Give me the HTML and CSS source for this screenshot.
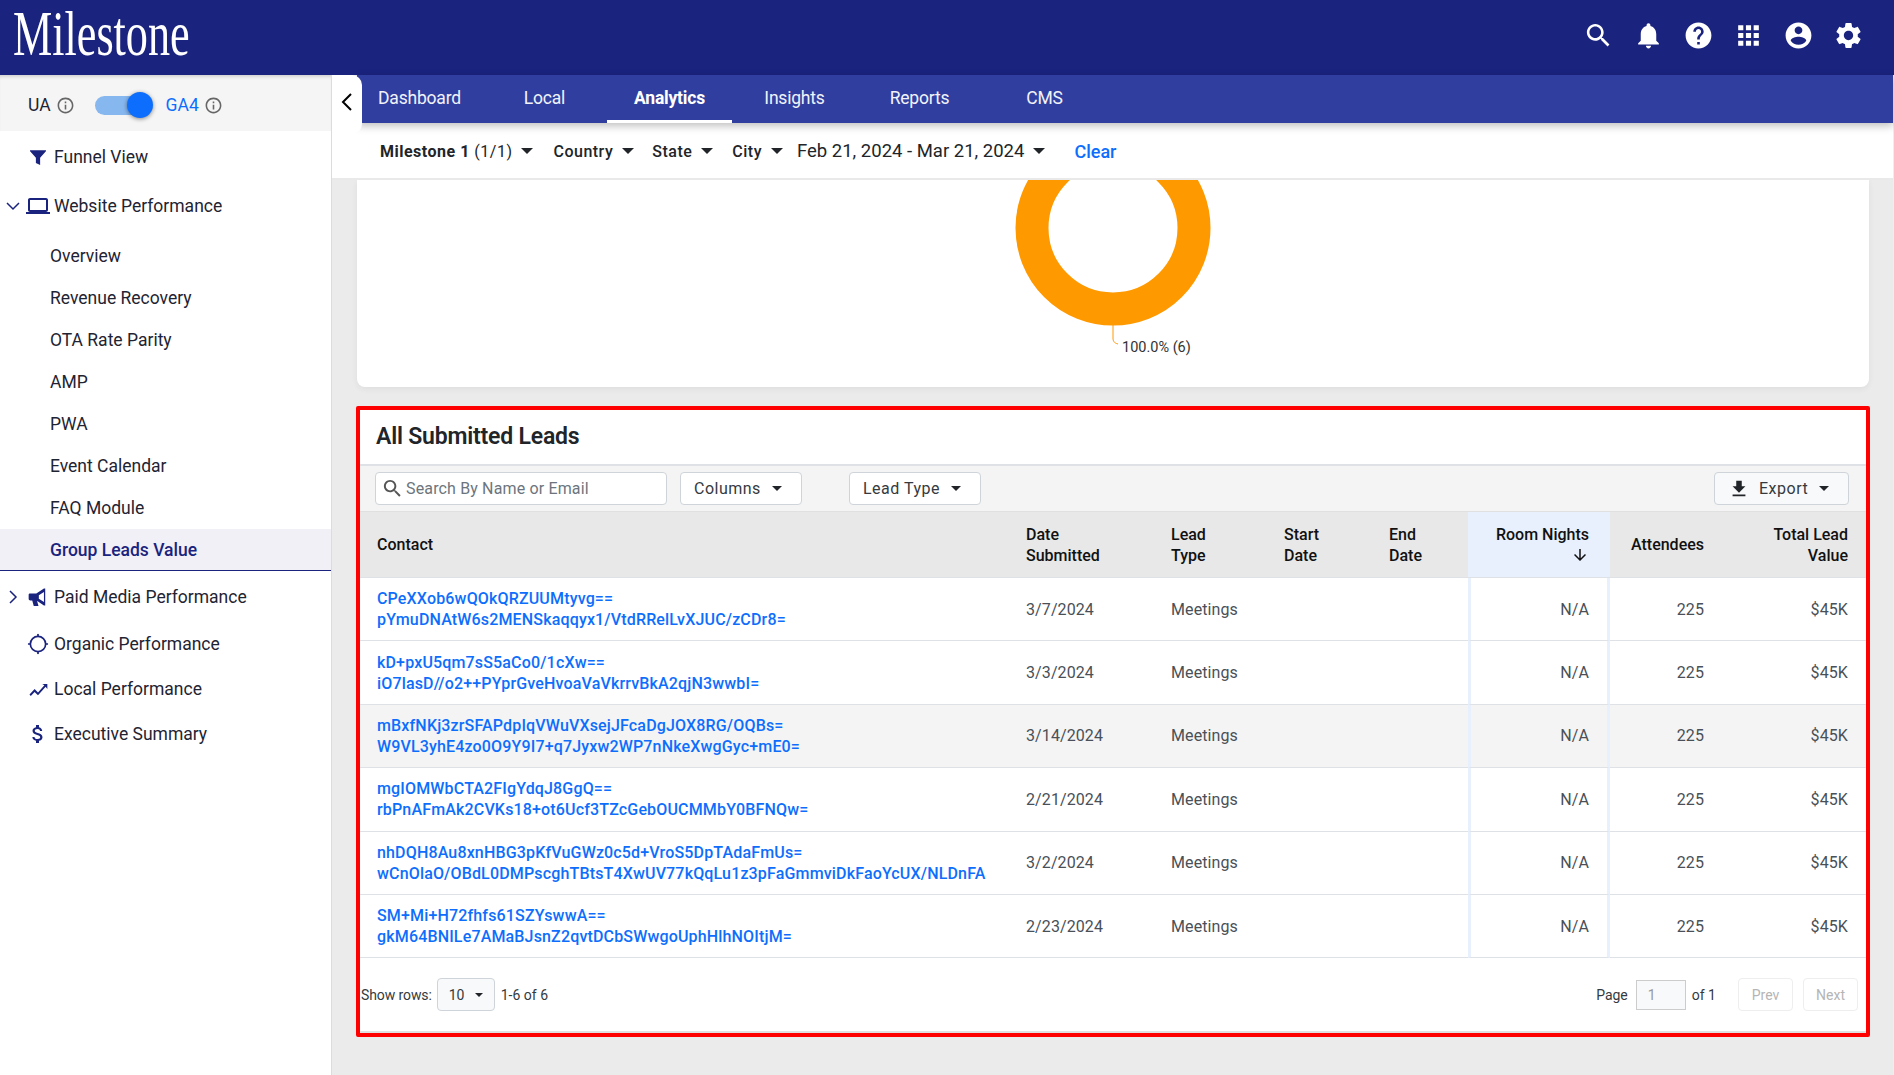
FILE: index.html
```html
<!DOCTYPE html>
<html lang="en">
<head>
    <meta charset="UTF-8">
    <meta name="viewport" content="width=device-width, initial-scale=1.0">
    <title>Group Leads Value</title>
    <link rel="stylesheet" href="styles.css">
</head>
<body>
    <header class="top-header">
        <div class="logo">Milestone</div>
        <div class="header-icons">
            <svg viewBox="0 0 24 24"><path d="M15.5 14h-.79l-.28-.27C15.41 12.59 16 11.11 16 9.5 16 5.91 13.09 3 9.5 3S3 5.91 3 9.5 5.91 16 9.5 16c1.61 0 3.09-.59 4.23-1.57l.27.28v.79l5 4.99L20.49 19l-4.99-5zm-6 0C7.01 14 5 11.99 5 9.5S7.01 5 9.5 5 14 7.01 14 9.5 11.99 14 9.5 14z"/></svg>
            <svg viewBox="0 0 24 24"><path d="M12 22c1.1 0 2-.9 2-2h-4c0 1.1.89 2 2 2zm6-6v-5c0-3.07-1.64-5.64-4.5-6.32V4c0-.83-.67-1.5-1.5-1.5s-1.5.67-1.5 1.5v.68C7.63 5.36 6 7.92 6 11v5l-2 2v1h16v-1l-2-2z"/></svg>
            <svg viewBox="0 0 24 24"><path d="M12 2C6.48 2 2 6.48 2 12s4.48 10 10 10 10-4.48 10-10S17.52 2 12 2zm1 17h-2v-2h2v2zm2.07-7.75l-.9.92C13.45 12.9 13 13.5 13 15h-2v-.5c0-1.1.45-2.1 1.17-2.83l1.24-1.26c.37-.36.59-.86.59-1.41 0-1.1-.9-2-2-2s-2 .9-2 2H8c0-2.21 1.79-4 4-4s4 1.79 4 4c0 .88-.36 1.68-.93 2.25z"/></svg>
            <svg viewBox="0 0 24 24"><path d="M4 8h4V4H4v4zm6 12h4v-4h-4v4zm-6 0h4v-4H4v4zm0-6h4v-4H4v4zm6 0h4v-4h-4v4zm6-10v4h4V4h-4zm-6 4h4V4h-4v4zm6 6h4v-4h-4v4zm0 6h4v-4h-4v4z"/></svg>
            <svg viewBox="0 0 24 24"><path d="M12 2C6.48 2 2 6.48 2 12s4.48 10 10 10 10-4.48 10-10S17.52 2 12 2zm0 3c1.66 0 3 1.34 3 3s-1.34 3-3 3-3-1.34-3-3 1.34-3 3-3zm0 14.2c-2.5 0-4.71-1.28-6-3.22.03-1.99 4-3.08 6-3.08 1.99 0 5.97 1.09 6 3.08-1.29 1.94-3.5 3.22-6 3.22z"/></svg>
            <svg viewBox="0 0 24 24"><path d="M19.14 12.94c.04-.3.06-.61.06-.94 0-.32-.02-.64-.07-.94l2.03-1.58c.18-.14.23-.41.12-.61l-1.92-3.32c-.12-.22-.37-.29-.59-.22l-2.39.96c-.5-.38-1.03-.7-1.62-.94l-.36-2.54c-.04-.24-.24-.41-.48-.41h-3.84c-.24 0-.43.17-.47.41l-.36 2.54c-.59.24-1.13.57-1.62.94l-2.39-.96c-.22-.08-.47 0-.59.22L2.74 8.87c-.12.21-.08.47.12.61l2.03 1.58c-.05.3-.09.63-.09.94s.02.64.07.94l-2.03 1.58c-.18.14-.23.41-.12.61l1.92 3.32c.12.22.37.29.59.22l2.39-.96c.5.38 1.03.7 1.62.94l.36 2.54c.05.24.24.41.48.41h3.84c.24 0 .44-.17.47-.41l.36-2.54c.59-.24 1.13-.56 1.62-.94l2.39.96c.22.08.47 0 .59-.22l1.92-3.32c.12-.22.07-.47-.12-.61l-2.01-1.58zM12 15.6c-1.98 0-3.6-1.62-3.6-3.6s1.62-3.6 3.6-3.6 3.6 1.62 3.6 3.6-1.62 3.6-3.6 3.6z"/></svg>
        </div>
    </header>

    <div class="app">
        <aside class="sidebar">
            <div class="version-strip">
                <span>UA</span>
                <svg class="info-icon" viewBox="0 0 24 24"><path d="M11 7h2v2h-2zm0 4h2v6h-2zm1-9C6.48 2 2 6.48 2 12s4.48 10 10 10 10-4.48 10-10S17.52 2 12 2zm0 18c-4.41 0-8-3.59-8-8s3.59-8 8-8 8 3.59 8 8-3.59 8-8 8z"/></svg>
                <span class="switch"><span class="switch-knob"></span></span>
                <span class="ga4">GA4</span>
                <svg class="info-icon" viewBox="0 0 24 24"><path d="M11 7h2v2h-2zm0 4h2v6h-2zm1-9C6.48 2 2 6.48 2 12s4.48 10 10 10 10-4.48 10-10S17.52 2 12 2zm0 18c-4.41 0-8-3.59-8-8s3.59-8 8-8 8 3.59 8 8-3.59 8-8 8z"/></svg>
            </div>

            <nav class="side-nav">
                <a class="nav-main funnel-item" href="#">
                    <span class="nav-toggle"></span>
                    <svg class="nav-icon" viewBox="0 0 24 24"><path d="M3.2 4h17.6c.6 0 .9.7.5 1.2L14.5 13v8.5l-5-2.5v-6L2.7 5.2C2.3 4.7 2.6 4 3.2 4z"/></svg>
                    Funnel View
                </a>
                <a class="nav-main website-item" href="#">
                    <svg class="nav-toggle" viewBox="0 0 14 14"><path d="M1 4l6 6 6-6" fill="none" stroke="#1a237e" stroke-width="1.5"/></svg>
                    <svg class="nav-icon" viewBox="0 0 24 24"><path d="M20 18c1.1 0 1.99-.9 1.99-2L22 6c0-1.1-.9-2-2-2H4c-1.1 0-2 .9-2 2v10c0 1.1.9 2 2 2H0v2h24v-2h-4zM4 6h16v10H4V6z"/></svg>
                    Website Performance
                </a>
                <div class="sub-nav">
                    <a href="#">Overview</a>
                    <a href="#">Revenue Recovery</a>
                    <a href="#">OTA Rate Parity</a>
                    <a href="#">AMP</a>
                    <a href="#">PWA</a>
                    <a href="#">Event Calendar</a>
                    <a href="#">FAQ Module</a>
                    <a class="active" href="#">Group Leads Value</a>
                </div>
                <a class="nav-main paid-item" href="#">
                    <svg class="nav-toggle" viewBox="0 0 14 14"><path d="M4 1l6 6-6 6" fill="none" stroke="#1a237e" stroke-width="1.5"/></svg>
                    <svg class="nav-icon icon-small" viewBox="0 0 24 24"><path d="M1 9.5C1 8.5 1.8 8 2.5 8H10l9-6h1.500v20H19l-7-4.800V17h-1l1.600 5.500H7L5.200 16H3c-1.200 0-2-.8-2-2zM19 6l-6 4v4l6 4z"/></svg>
                    Paid Media Performance
                </a>
                <a class="nav-main organic-item" href="#">
                    <span class="nav-toggle"></span>
                    <svg class="nav-icon icon-small" viewBox="0 0 24 24"><circle cx="12" cy="12" r="9" fill="none" stroke="#1a237e" stroke-width="2"/><path d="M11 0h2v3h-2zM11 21h2v3h-2zM0 11h3v2H0zM21 11h3v2h-3z"/></svg>
                    Organic Performance
                </a>
                <a class="nav-main local-item" href="#">
                    <span class="nav-toggle"></span>
                    <svg class="nav-icon icon-small" viewBox="0 0 24 24"><path d="M2 18.500l6-6.500 4 4 7.500-8.500-2.500-1.500h6v6l-2-2.500-9 10-4-4-4.500 4.800z"/></svg>
                    Local Performance
                </a>
                <a class="nav-main summary-item" href="#">
                    <span class="nav-toggle"></span>
                    <svg class="nav-icon" viewBox="0 0 24 24"><path d="M11.800 10.900c-2.270-.59-3-1.200-3-2.150 0-1.090 1.010-1.850 2.700-1.850 1.780 0 2.440.85 2.500 2.100h2.210c-.07-1.720-1.120-3.300-3.210-3.810V3h-3v2.160c-1.940.42-3.500 1.680-3.500 3.610 0 2.310 1.910 3.460 4.700 4.130 2.500.6 3 1.480 3 2.410 0 .69-.49 1.790-2.700 1.790-2.060 0-2.870-.92-2.980-2.100h-2.200c.12 2.190 1.760 3.420 3.680 3.830V21h3v-2.150c1.950-.37 3.500-1.500 3.500-3.550 0-2.840-2.430-3.810-4.700-4.400z"/></svg>
                    Executive Summary
                </a>
            </nav>
        </aside>

        <main class="main">
            <div class="tab-row">
                <button class="btn-collapse">
                    <svg viewBox="0 0 14 20"><path d="M11 2l-8 8 8 8" fill="none" stroke="#000" stroke-width="2"/></svg>
                </button>
                <div class="tabs">
                    <a href="#">Dashboard</a>
                    <a href="#">Local</a>
                    <a class="active" href="#">Analytics</a>
                    <a href="#">Insights</a>
                    <a href="#">Reports</a>
                    <a href="#">CMS</a>
                </div>
            </div>

            <div class="filter-bar">
                <span class="filter milestone-filter"><b>Milestone 1</b> (1/1)<i class="caret"></i></span>
                <span class="filter country-filter">Country<i class="caret"></i></span>
                <span class="filter state-filter">State<i class="caret"></i></span>
                <span class="filter city-filter">City<i class="caret"></i></span>
                <span class="filter date-filter">Feb 21, 2024 - Mar 21, 2024<i class="caret"></i></span>
                <a class="clear-link" href="#">Clear</a>
            </div>

            <div class="content">
                <section class="chart-card">
                    <svg class="donut" viewBox="0 1 300 207">
                        <circle cx="150" cy="49" r="81" fill="none" stroke="#ff9900" stroke-width="33"/>
                        <path d="M150 146v13c0 3 1 5 5 6" fill="none" stroke="#ff9900"/>
                        <text class="donut-label" x="159" y="173">100.0% (6)</text>
                    </svg>
                </section>

                <section class="leads-card">
                    <h2>All Submitted Leads</h2>

                    <div class="toolbar">
                        <div class="search-box">
                            <svg viewBox="0 0 24 24"><path d="M15.500 14h-.79l-.28-.27C15.410 12.590 16 11.110 16 9.500 16 5.910 13.090 3 9.500 3S3 5.910 3 9.500 5.910 16 9.500 16c1.610 0 3.090-.59 4.230-1.570l.27.28v.79l5 4.990L20.490 19l-4.990-5zm-6 0C7.010 14 5 11.990 5 9.500S7.010 5 9.500 5 14 7.010 14 9.500 11.990 14 9.500 14z"/></svg>
                            <span>Search By Name or Email</span>
                        </div>
                        <button class="btn-tool btn-columns">Columns<i class="caret"></i></button>
                        <button class="btn-tool btn-lead">Lead Type<i class="caret"></i></button>
                        <button class="btn-tool btn-export">
                            <svg viewBox="0 0 24 24"><path d="M19 9h-4V3H9v6H5l7 7 7-7zM5 18v2h14v-2H5z"/></svg>
                            Export<i class="caret"></i>
                        </button>
                    </div>

                    <table class="leads-table">
                        <colgroup>
                            <col class="col-contact">
                            <col class="col-date">
                            <col class="col-type">
                            <col class="col-start">
                            <col class="col-end">
                            <col class="col-nights">
                            <col class="col-attendees">
                            <col class="col-value">
                        </colgroup>
                        <thead>
                            <tr>
                                <th class="contact">Contact</th>
                                <th>Date<br>Submitted</th>
                                <th>Lead<br>Type</th>
                                <th>Start<br>Date</th>
                                <th>End<br>Date</th>
                                <th class="num nights sorted">Room Nights<br><svg class="sort-arrow" viewBox="0 0 24 24"><path d="M20 12l-1.410-1.410L13 16.170V4h-2v12.170l-5.580-5.590L4 12l8 8 8-8z"/></svg></th>
                                <th class="num attendees">Attendees</th>
                                <th class="num value">Total Lead<br>Value</th>
                            </tr>
                        </thead>
                        <tbody>
                            <tr>
                                <td class="contact"><a href="#">CPeXXob6wQOkQRZUUMtyvg==<br>pYmuDNAtW6s2MENSkaqqyx1/VtdRRelLvXJUC/zCDr8=</a></td>
                                <td>3/7/2024</td><td>Meetings</td><td></td><td></td>
                                <td class="num nights">N/A</td><td class="num attendees">225</td><td class="num value">$45K</td>
                            </tr>
                            <tr>
                                <td class="contact"><a href="#">kD+pxU5qm7sS5aCo0/1cXw==<br>iO7lasD//o2++PYprGveHvoaVaVkrrvBkA2qjN3wwbI=</a></td>
                                <td>3/3/2024</td><td>Meetings</td><td></td><td></td>
                                <td class="num nights">N/A</td><td class="num attendees">225</td><td class="num value">$45K</td>
                            </tr>
                            <tr class="row-hover">
                                <td class="contact"><a href="#">mBxfNKj3zrSFAPdpIqVWuVXsejJFcaDgJOX8RG/OQBs=<br>W9VL3yhE4zo0O9Y9I7+q7Jyxw2WP7nNkeXwgGyc+mE0=</a></td>
                                <td>3/14/2024</td><td>Meetings</td><td></td><td></td>
                                <td class="num nights">N/A</td><td class="num attendees">225</td><td class="num value">$45K</td>
                            </tr>
                            <tr>
                                <td class="contact"><a href="#">mgIOMWbCTA2FIgYdqJ8GgQ==<br>rbPnAFmAk2CVKs18+ot6Ucf3TZcGebOUCMMbY0BFNQw=</a></td>
                                <td>2/21/2024</td><td>Meetings</td><td></td><td></td>
                                <td class="num nights">N/A</td><td class="num attendees">225</td><td class="num value">$45K</td>
                            </tr>
                            <tr>
                                <td class="contact"><a href="#">nhDQH8Au8xnHBG3pKfVuGWz0c5d+VroS5DpTAdaFmUs=<br>wCnOlaO/OBdL0DMPscghTBtsT4XwUV77kQqLu1z3pFaGmmviDkFaoYcUX/NLDnFA</a></td>
                                <td>3/2/2024</td><td>Meetings</td><td></td><td></td>
                                <td class="num nights">N/A</td><td class="num attendees">225</td><td class="num value">$45K</td>
                            </tr>
                            <tr>
                                <td class="contact"><a href="#">SM+Mi+H72fhfs61SZYswwA==<br>gkM64BNILe7AMaBJsnZ2qvtDCbSWwgoUphHlhNOItjM=</a></td>
                                <td>2/23/2024</td><td>Meetings</td><td></td><td></td>
                                <td class="num nights">N/A</td><td class="num attendees">225</td><td class="num value">$45K</td>
                            </tr>
                        </tbody>
                    </table>

                    <div class="table-footer">
                        <span class="rows-label">Show rows:</span>
                        <span class="rows-select">10<i class="caret"></i></span>
                        <span>1-6 of 6</span>
                        <div class="pager">
                            <span>Page</span>
                            <span class="page-input">1</span>
                            <span>of 1</span>
                            <button class="btn-page btn-prev">Prev</button>
                            <button class="btn-page">Next</button>
                        </div>
                    </div>
                </section>
            </div>
        </main>
    </div>
</body>
</html>
```

FILE: styles.css
```css
* {
    box-sizing: border-box;
}

html, body {
    height: 100%;
}

body {
    font-family: Roboto, "Liberation Sans", sans-serif;
    color: #212529;
    background-color: #ebebeb;
    margin: 0;
    overflow: hidden;
    display: flex;
    flex-direction: column;
}

a {
    text-decoration: none;
    color: inherit;
}

button {
    font-family: inherit;
}

.caret {
    display: inline-block;
    width: 0;
    height: 0;
    border-left: 5px solid transparent;
    border-right: 5px solid transparent;
    border-top: 5px solid #212529;
}

/* Cabecera */
.top-header {
    height: 75px;
    flex: none;
    background-color: #1a237e;
    display: flex;
    justify-content: space-between;
    align-items: center;
    padding-right: 30px;
    padding-bottom: 4px;
}

.logo {
    font-family: "Liberation Serif", serif;
    font-size: 64px;
    line-height: 75px;
    color: #ffffff;
    margin-left: 13px;
    margin-bottom: 4px;
    transform: scaleX(0.69);
    transform-origin: left center;
}

.header-icons {
    display: flex;
    gap: 19px;
}

.header-icons svg {
    width: 31px;
    height: 31px;
    fill: #ffffff;
}

.app {
    flex: 1;
    min-height: 0;
    display: flex;
}

/* Menu lateral */
.sidebar {
    width: 332px;
    flex: none;
    background-color: #ffffff;
    border-right: 1px solid #dcdcdc;
    font-size: 17.5px;
    color: #1f2433;
}

.version-strip {
    height: 56px;
    background-color: #f5f5f5;
    display: flex;
    align-items: center;
    padding-left: 28px;
    padding-top: 4px;
    box-shadow: inset 0 4px 4px -3px rgba(0,0,0,0.2);
}

.info-icon {
    width: 19px;
    height: 19px;
    fill: #666666;
    margin-left: 5px;
}

.switch {
    position: relative;
    width: 54px;
    height: 19px;
    margin-left: 20px;
    margin-right: 17px;
    border-radius: 10px;
    background-color: #86b7ef;
}

.switch-knob {
    position: absolute;
    right: -4px;
    top: -3.5px;
    width: 26px;
    height: 26px;
    border-radius: 50%;
    background-color: #0d6efd;
    box-shadow: 0 1px 4px rgba(0,0,0,0.45);
}

.ga4 {
    color: #0d6efd;
}

.side-nav {
    display: flex;
    flex-direction: column;
}

.nav-main {
    display: flex;
    align-items: center;
    height: 42px;
    padding-left: 4px;
}

.nav-toggle {
    width: 18px;
    height: 14px;
    flex: none;
    margin-right: 4px;
}

.nav-icon {
    width: 24px;
    height: 24px;
    fill: #1a237e;
    margin-right: 4px;
    flex: none;
}

.icon-small {
    transform: scale(0.85);
}

.funnel-item {
    height: 51px;
}

.website-item {
    margin-top: 3px;
    margin-bottom: 8px;
}

.funnel-item .nav-icon {
    transform: scale(0.85);
}

.sub-nav a {
    display: flex;
    align-items: center;
    height: 42px;
    padding-left: 50px;
}

.sub-nav a.active {
    color: #1a237e;
    font-weight: 500;
    background-color: #f0f0f6;
    border-bottom: 1px solid #1a237e;
}

.paid-item {
    margin-top: 5px;
}

.organic-item {
    margin-top: 5px;
}

.local-item,
.summary-item {
    margin-top: 3px;
}

/* Pestañas */
.main {
    flex: 1;
    min-width: 0;
    display: flex;
    flex-direction: column;
    border-right: 1px solid #eeeeee;
}

.tab-row {
    height: 48px;
    flex: none;
    display: flex;
    align-items: flex-start;
    position: relative;
    z-index: 3;
}

.btn-collapse {
    position: relative;
    z-index: 1;
    width: 30px;
    height: 59px;
    flex: none;
    padding: 0 0 5px;
    border: none;
    border-radius: 0 10px 10px 0;
    background-color: #ffffff;
    display: flex;
    align-items: center;
    justify-content: center;
}

.btn-collapse svg {
    width: 14px;
    height: 20px;
}

.tabs {
    flex: 1;
    height: 48px;
    margin-left: -5px;
    display: flex;
    background-color: #303f9f;
    box-shadow: 0 3px 8px rgba(0,0,0,0.25);
}

.tabs a {
    width: 125px;
    height: 48px;
    color: #f2f3fa;
    font-size: 17.5px;
    letter-spacing: -0.2px;
    display: flex;
    align-items: center;
    justify-content: center;
    padding-bottom: 3px;
}

.tabs a.active {
    color: #ffffff;
    font-weight: 700;
    border-bottom: 3px solid #ffffff;
    padding-bottom: 0;
}

/* Filtros */
.filter-bar {
    height: 57px;
    flex: none;
    background-color: #ffffff;
    border-bottom: 2px solid #e9e9e9;
    display: flex;
    align-items: center;
    position: relative;
    z-index: 2;
    font-size: 16px;
    padding-top: 1px;
}

.filter {
    display: flex;
    align-items: center;
    white-space: pre;
}

.filter .caret {
    margin-left: 9px;
    border-left-width: 6px;
    border-right-width: 6px;
    border-top-width: 6px;
}

.filter b {
    font-weight: 700;
}

.milestone-filter {
    margin-left: 48px;
    letter-spacing: 0.5px;
}

.country-filter {
    margin-left: 20px;
    letter-spacing: 0.5px;
    font-weight: 500;
}

.state-filter {
    margin-left: 18px;
    letter-spacing: 0.5px;
    font-weight: 500;
}

.city-filter {
    margin-left: 19px;
    letter-spacing: 0.5px;
    font-weight: 500;
}

.date-filter {
    margin-left: 14px;
    font-size: 18.5px;
}

.clear-link {
    margin-left: 29px;
    color: #0d6efd;
    font-size: 18px;
    font-weight: 500;
}

/* Contenido */
.content {
    flex: 1;
    min-height: 0;
    padding: 0 24px 0 25px;
    background-color: #ebebeb;
}

.chart-card {
    height: 207px;
    background-color: #ffffff;
    border-radius: 0 0 8px 8px;
    box-shadow: 0 2px 6px rgba(0,0,0,0.06);
    margin-bottom: 19px;
}

.donut {
    display: block;
    width: 300px;
    height: 207px;
    margin: 0 auto;
}

.donut-label {
    font-family: Roboto, sans-serif;
    font-size: 14.5px;
    fill: #333333;
}

.leads-card {
    margin: 0 -1px;
    border: 4px solid #ff0000;
    border-radius: 2px;
    background-color: #ffffff;
    height: 631px;
    display: flex;
    flex-direction: column;
}

.leads-card h2 {
    margin: 0;
    height: 56px;
    flex: none;
    padding: 0 16px 2px;
    display: flex;
    align-items: center;
    font-size: 23px;
    font-weight: 600;
    color: #212529;
    letter-spacing: -0.2px;
    border-bottom: 2px solid #dee2e6;
}

.toolbar {
    height: 46px;
    flex: none;
    background-color: #f4f4f4;
    border-bottom: 1px solid #e0e0e0;
    display: flex;
    align-items: center;
    padding: 0 17px 0 15px;
}

.search-box {
    width: 292px;
    height: 33px;
    background-color: #ffffff;
    border: 1px solid #ced4da;
    border-radius: 4px;
    display: flex;
    align-items: center;
    padding-left: 5px;
    color: #6c757d;
    font-size: 16px;
    letter-spacing: 0.15px;
}

.search-box svg {
    width: 23px;
    height: 23px;
    fill: #555555;
    margin-right: 2px;
}

.btn-tool {
    height: 33px;
    background-color: #ffffff;
    border: 1px solid #ced4da;
    border-radius: 4px;
    font-size: 16px;
    letter-spacing: 0.5px;
    color: #343a40;
    display: flex;
    align-items: center;
    padding: 0 13px;
}

.btn-tool .caret {
    margin-left: 11px;
}

.btn-columns {
    width: 122px;
    margin-left: 13px;
}

.btn-lead {
    width: 132px;
    margin-left: 47px;
}

.btn-export {
    width: 135px;
    margin-left: auto;
    background-color: #f8f9fa;
}

.btn-export svg {
    width: 22px;
    height: 22px;
    fill: #212529;
    margin-right: 9px;
}

/* Tabla */
.leads-table {
    width: 100%;
    border-collapse: separate;
    border-spacing: 0;
    table-layout: fixed;
    flex: none;
    font-size: 16px;
    line-height: 21px;
}

.col-contact { width: 650px; }
.col-date { width: 145px; }
.col-type { width: 113px; }
.col-start { width: 105px; }
.col-end { width: 95px; }
.col-nights { width: 142px; }
.col-attendees { width: 115px; }
.col-value { width: 141px; }

.leads-table th {
    height: 66px;
    background-color: #e8e8e8;
    color: #111111;
    font-weight: 500;
    text-align: left;
    padding: 0 16px;
    border-bottom: 1px solid #dee2e6;
}

.leads-table td {
    height: 63.4px;
    padding: 0 16px;
    border-bottom: 1px solid #dee2e6;
    color: #495057;
    letter-spacing: 0.1px;
}

.leads-table .contact {
    padding-left: 17px;
}

.leads-table td a {
    color: #0d6efd;
    font-weight: 500;
    letter-spacing: 0.16px;
}

.leads-table .num {
    text-align: right;
}

.leads-table .nights {
    padding-right: 21px;
}

.leads-table .attendees {
    padding-right: 21px;
}

.leads-table .value {
    padding-right: 18px;
}

.leads-table td.nights {
    border-left: 3px solid #e8f0fe;
    border-right: 3px solid #e8f0fe;
    padding-right: 18px;
}

.leads-table th.sorted {
    background-color: #e8f0fe;
}

.sort-arrow {
    width: 18px;
    height: 18px;
    fill: #111111;
    vertical-align: -3px;
}

.row-hover td {
    background-color: #f4f4f4;
}

/* Pie de la tabla */
.table-footer {
    flex: 1;
    display: flex;
    align-items: center;
    padding-left: 1px;
    padding-right: 8px;
    font-size: 14px;
    color: #343a40;
    border-bottom: 2px solid #e0e0e0;
}

.rows-label {
    letter-spacing: -0.1px;
}

.rows-select {
    width: 58px;
    height: 33px;
    margin: 0 6px 0 5px;
    padding-left: 11px;
    background-color: #f8f9fa;
    border: 1px solid #ced4da;
    border-radius: 4px;
    display: flex;
    align-items: center;
}

.rows-select .caret {
    margin-left: 11px;
    border-left-width: 4px;
    border-right-width: 4px;
    border-top-width: 4px;
}

.pager {
    margin-left: auto;
    display: flex;
    align-items: center;
}

.page-input {
    width: 50px;
    height: 30px;
    margin: 0 6px 0 8px;
    padding-left: 11px;
    background-color: #f8f9fa;
    border: 1px solid #cccccc;
    color: #999999;
    display: flex;
    align-items: center;
}

.btn-page {
    height: 33px;
    width: 55px;
    background-color: #ffffff;
    border: 1px solid #eeeeee;
    border-radius: 4px;
    color: #b5b5b5;
    font-size: 14px;
    margin-left: 10px;
    padding: 0;
}

.btn-prev {
    margin-left: 22px;
}
```
